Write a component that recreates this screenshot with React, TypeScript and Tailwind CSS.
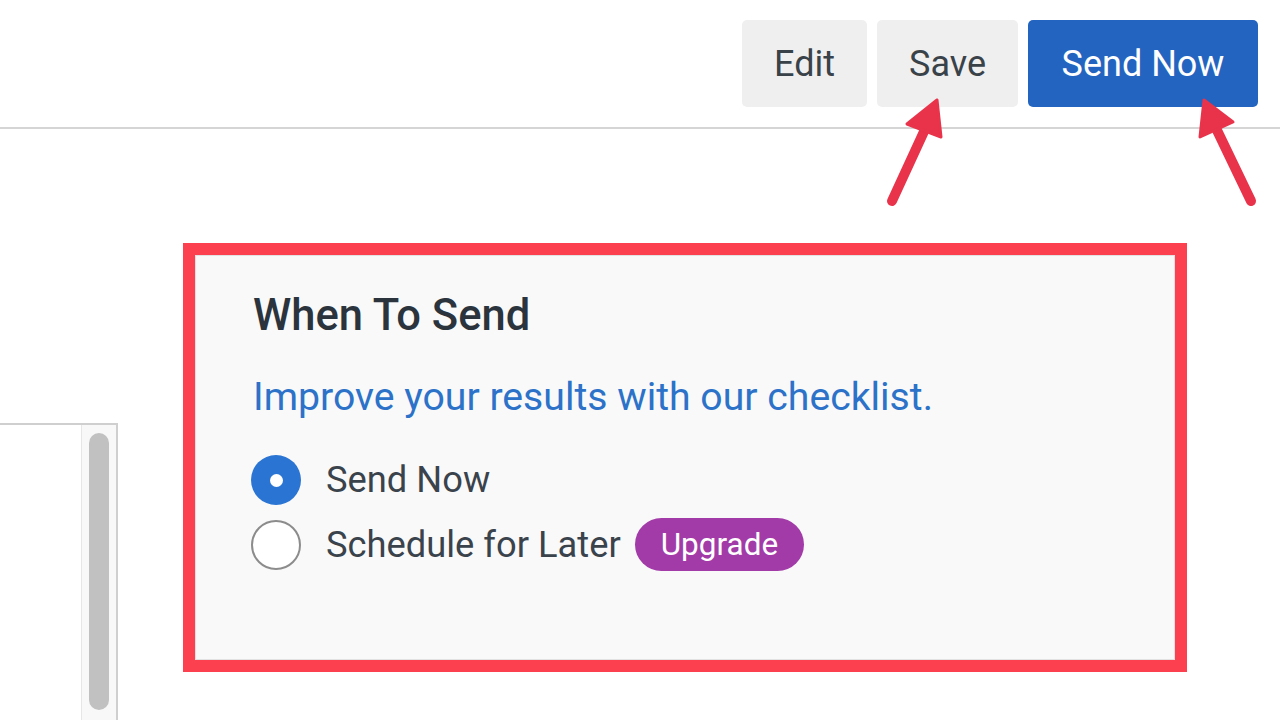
import { useState } from "react"

type RadioProps = {
    checked: boolean,
    onClick: () => void,
}

const Radio = ({ checked, onClick }: RadioProps) => {
    if (checked) {
        return (
            <button onClick={onClick} className="w-[50px] h-[50px] rounded-full bg-[#2a74d3] flex items-center justify-center shrink-0">
                <span className="w-[13px] h-[13px] rounded-full bg-white" />
            </button>
        )
    }
    return (
        <button onClick={onClick} className="w-[50px] h-[50px] rounded-full bg-white border-2 border-[#8c8c8c] shrink-0" />
    )
}

const Arrows = () => (
    <svg className="absolute inset-0 pointer-events-none" width="1280" height="720">
        <g fill="#e8334a" stroke="#e8334a" strokeLinecap="round" strokeLinejoin="round">
            <line x1="892" y1="201" x2="927" y2="125" strokeWidth="10" />
            <polygon points="937,100 907,124 941,137" strokeWidth="3" />
            <line x1="1251" y1="201" x2="1214" y2="124" strokeWidth="10" />
            <polygon points="1204,100 1200,137 1233,122" strokeWidth="3" />
        </g>
    </svg>
)

export default function App() {
    const [mode, setMode] = useState<"now" | "later">("now");

    return (
        <div className="relative w-[1280px] h-[720px] overflow-hidden bg-white" style={{ fontFamily: "Roboto, 'Noto Sans', sans-serif" }}>
            <header className="flex justify-end gap-[10px] pt-[20px] pr-[22px] pb-[20px] border-b-2 border-[#d5d5d5]">
                <button className="w-[125px] h-[87px] rounded-[5px] bg-[#efefef] text-[36px] text-[#3a4249]">Edit</button>
                <button className="w-[141px] h-[87px] rounded-[5px] bg-[#efefef] text-[36px] text-[#3a4249]">Save</button>
                <button className="w-[230px] h-[87px] rounded-[5px] bg-[#2364c1] text-[36px] text-white">Send Now</button>
            </header>

            <div className="flex items-start">
                <div className="w-[118px] h-[420px] mt-[294px] border-t-2 border-r-2 border-[#cfcfcf] flex justify-end">
                    <div className="w-[35px] h-full bg-[#f8f8f8] border-l border-[#e6e6e6] flex justify-center pt-[8px]">
                        <div className="w-[20px] h-[277px] rounded-full bg-[#c1c1c1]" />
                    </div>
                </div>

                <div className="ml-[65px] mt-[114px] w-[1004px] h-[429px] border-[12px] border-[#fc4050]">
                    <div className="h-full bg-[#f9f9f9] border border-[#e2e2e2] pl-[55px] pt-[35px]">
                        <h2 className="ml-[2px] text-[43.5px] leading-[50px] font-medium text-[#2b343d]">When To Send</h2>
                        <a className="block ml-[2px] mt-[33px] text-[39.2px] leading-[46px] text-[#2c72c9]">Improve your results with our checklist.</a>

                        <div className="mt-[35px] flex flex-col gap-[13px]">
                            <div className="flex items-center gap-[25px]">
                                <Radio checked={mode === "now"} onClick={() => setMode("now")} />
                                <span className="text-[36.3px] leading-[44px] text-[#3a434c]">Send Now</span>
                            </div>
                            <div className="flex items-center gap-[25px]">
                                <Radio checked={mode === "later"} onClick={() => setMode("later")} />
                                <span className="text-[36.3px] leading-[44px] text-[#3a434c]">Schedule for Later</span>
                                <span className="-ml-[11px] h-[53px] px-[26px] rounded-full bg-[#a23ba8] text-white text-[31.5px] flex items-center">Upgrade</span>
                            </div>
                        </div>
                    </div>
                </div>
            </div>

            <Arrows />
        </div>
    )
}
